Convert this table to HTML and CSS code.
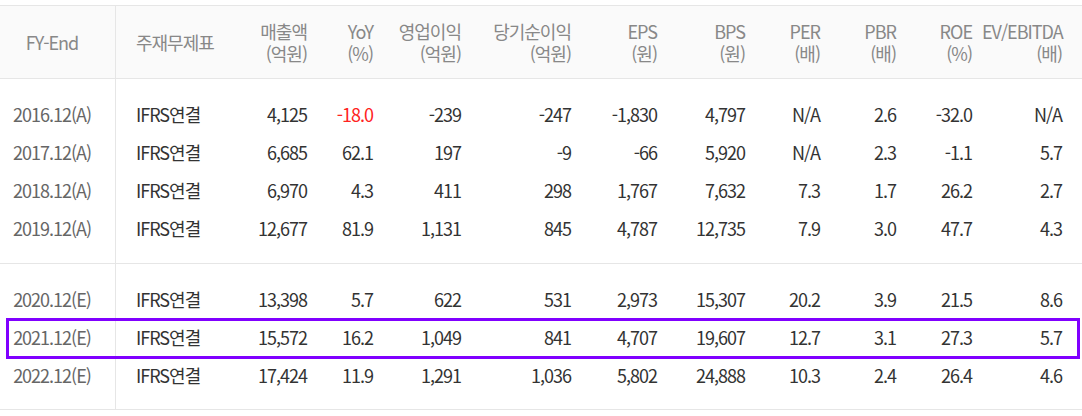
FILE: index.html
```html
<!DOCTYPE html>
<html lang="ko">
<head>
<meta charset="utf-8">
<link rel="stylesheet" href="styles.css">
</head>
<body>
<div class="fin">
  <div class="row head">
    <div class="c fy">FY-End</div>
    <div class="c kind">주재무제표</div>
    <div class="c">매출액<br>(억원)</div>
    <div class="c">YoY<br>(%)</div>
    <div class="c">영업이익<br>(억원)</div>
    <div class="c">당기순이익<br>(억원)</div>
    <div class="c">EPS<br>(원)</div>
    <div class="c">BPS<br>(원)</div>
    <div class="c">PER<br>(배)</div>
    <div class="c">PBR<br>(배)</div>
    <div class="c">ROE<br>(%)</div>
    <div class="c last">EV/EBITDA<br>(배)</div>
  </div>
  <div class="group">
    <div class="row"><div class="c fy">2016.12(A)</div><div class="c kind">IFRS연결</div><div class="c">4,125</div><div class="c neg">-18.0</div><div class="c">-239</div><div class="c">-247</div><div class="c">-1,830</div><div class="c">4,797</div><div class="c">N/A</div><div class="c">2.6</div><div class="c">-32.0</div><div class="c last">N/A</div></div>
    <div class="row"><div class="c fy">2017.12(A)</div><div class="c kind">IFRS연결</div><div class="c">6,685</div><div class="c">62.1</div><div class="c">197</div><div class="c">-9</div><div class="c">-66</div><div class="c">5,920</div><div class="c">N/A</div><div class="c">2.3</div><div class="c">-1.1</div><div class="c last">5.7</div></div>
    <div class="row"><div class="c fy">2018.12(A)</div><div class="c kind">IFRS연결</div><div class="c">6,970</div><div class="c">4.3</div><div class="c">411</div><div class="c">298</div><div class="c">1,767</div><div class="c">7,632</div><div class="c">7.3</div><div class="c">1.7</div><div class="c">26.2</div><div class="c last">2.7</div></div>
    <div class="row"><div class="c fy">2019.12(A)</div><div class="c kind">IFRS연결</div><div class="c">12,677</div><div class="c">81.9</div><div class="c">1,131</div><div class="c">845</div><div class="c">4,787</div><div class="c">12,735</div><div class="c">7.9</div><div class="c">3.0</div><div class="c">47.7</div><div class="c last">4.3</div></div>
  </div>
  <div class="group est">
    <div class="row"><div class="c fy">2020.12(E)</div><div class="c kind">IFRS연결</div><div class="c">13,398</div><div class="c">5.7</div><div class="c">622</div><div class="c">531</div><div class="c">2,973</div><div class="c">15,307</div><div class="c">20.2</div><div class="c">3.9</div><div class="c">21.5</div><div class="c last">8.6</div></div>
    <div class="row hl"><div class="c fy">2021.12(E)</div><div class="c kind">IFRS연결</div><div class="c">15,572</div><div class="c">16.2</div><div class="c">1,049</div><div class="c">841</div><div class="c">4,707</div><div class="c">19,607</div><div class="c">12.7</div><div class="c">3.1</div><div class="c">27.3</div><div class="c last">5.7</div></div>
    <div class="row"><div class="c fy">2022.12(E)</div><div class="c kind">IFRS연결</div><div class="c">17,424</div><div class="c">11.9</div><div class="c">1,291</div><div class="c">1,036</div><div class="c">5,802</div><div class="c">24,888</div><div class="c">10.3</div><div class="c">2.4</div><div class="c">26.4</div><div class="c last">4.6</div></div>
  </div>
</div>
</body>
</html>
```
FILE: styles.css
```css
* { box-sizing: border-box; }
html, body { margin: 0; padding: 0; background: #fff; }
body {
  font-family: "Noto Sans CJK KR", "Noto Sans", sans-serif;
  font-size: 18px;
  letter-spacing: -1px;
  color: #333;
}
.fin {
  margin-top: 5px;
  width: 1082px;
  border-top: 1px solid #e6e6e6;
}
.row {
  display: grid;
  grid-template-columns: 116px 114px 87px 66px 88px 110px 86px 88px 75px 76px 76px 100px;
  height: 38px;
  align-items: center;
}
.c {
  text-align: right;
  padding-right: 10px;
  white-space: nowrap;
  line-height: 22px;
}
.c.fy {
  text-align: center;
  padding-right: 11px;
  color: #666;
  align-self: stretch;
  display: flex;
  align-items: center;
  justify-content: center;
  border-right: 1px solid #e6e6e6;
}
.c.kind { text-align: left; padding-left: 20px; padding-right: 0; }
.c.last { padding-right: 20px; }
.c.neg { color: #f22; }
.head {
  height: 73px;
  background: #fafafa;
  border-bottom: 1px solid #e6e6e6;
  color: #888;
}
.head .c { color: #888; }
.head .c.fy { color: #888; }
.group {
  padding: 16px 0;
  border-bottom: 1px solid #e6e6e6;
  background: linear-gradient(#e6e6e6, #e6e6e6) 115px 0 / 1px 100% no-repeat;
}
.group.est { padding: 16px 0 15px; }
.hl { position: relative; }
.hl::after {
  content: "";
  position: absolute;
  top: 0;
  left: 6px;
  right: 2px;
  height: 35px;
  border: 3px solid #8000ff;
  pointer-events: none;
}
```
